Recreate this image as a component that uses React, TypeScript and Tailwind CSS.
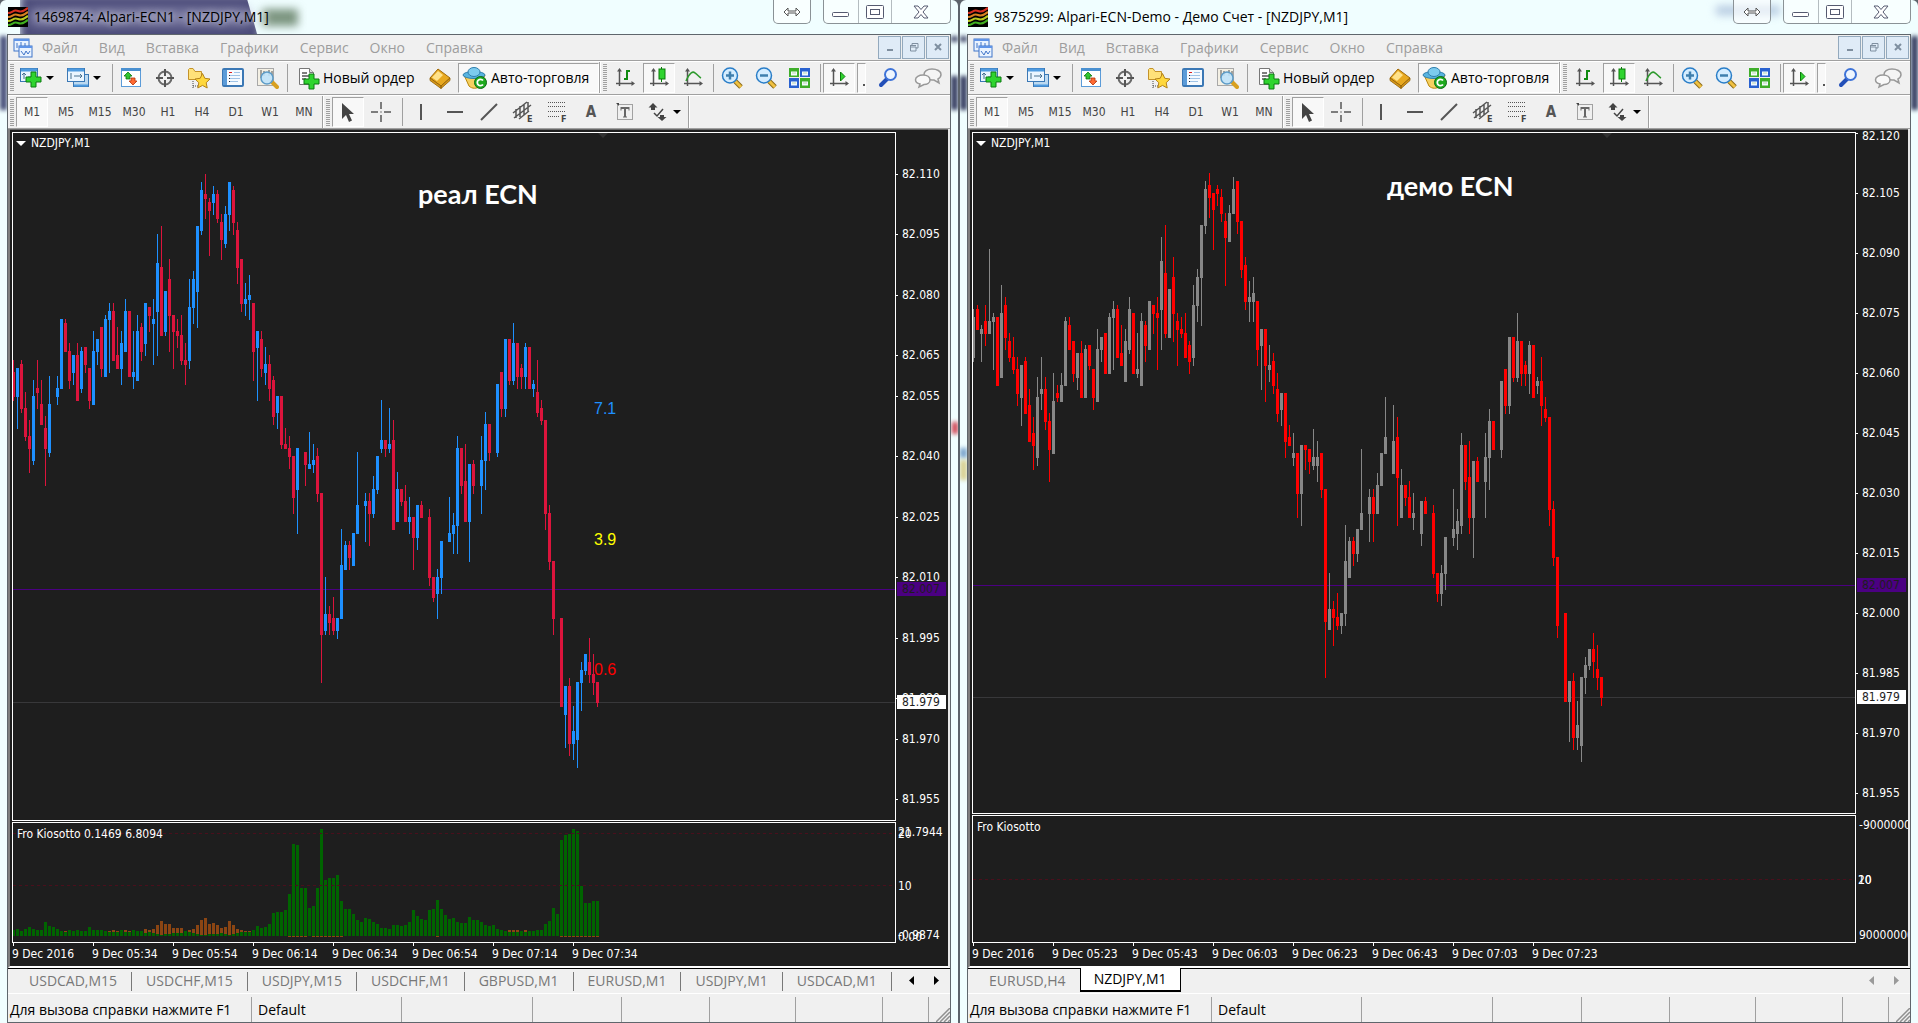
import React from 'react';

// One token per minute bar: high/open/close/low in points around 82.000, "-" for a minute without ticks
const REAL_BARS = `
64/61/55/54 62/55/62/47 64/63/52/51 56/52/45/44 49/45/42/36 59/39/55/38 64/57/56/52 59/53/48/48 50/47/42/33 60/41/53/40
- 60/55/57/53 74/57/74/57 74/73/66/66 68/66/59/57 65/61/65/58 68/65/54/54 67/57/66/56 67/67/63/61 62/62/54/52
71/53/66/53 69/66/69/63 72/72/62/60 75/60/74/60 78/74/76/61 78/76/64/64 72/65/62/62 71/62/68/58 79/66/76/66 76/76/60/60
71/60/61/57 75/59/71/59 73/72/66/64 78/68/78/65 77/77/75/71 79/73/74/63 95/76/88/65 97/87/70/70 81/71/81/70 89/84/75/66
75/75/71/62 74/71/70/67 75/70/64/63 68/64/63/58 84/64/77/62 86/77/84/73 97/81/97/72 108/96/106/95 110/105/104/99 104/103/101/90
107/103/105/100 106/105/99/98 100/98/94/89 102/93/100/92 108/100/108/96 107/106/98/95 98/96/87/83 89/89/78/76 83/78/79/75 85/79/80/74
78/78/66/59 71/67/71/54 71/69/62/60 67/61/63/58 65/63/57/54 60/59/50/48 55/51/55/47 55/55/43/42 47/43/42/42 45/42/40/37
40/40/30/26 42/32/42/21 - 41/41/38/33 46/37/38/37 43/38/39/36 42/40/31/29 31/31/-4/-16 10/-3/1/-4 3/1/-1/-4
5/0/-3/-4 0/-3/0/-5 22/0/13/0 19/12/18/12 19/18/15/12 21/13/21/13 41/21/28/21 - 31/28/29/19 31/29/26/18
35/26/32/25 40/32/40/31 54/42/44/41 44/44/42/40 52/42/43/41 49/44/22/22 36/24/32/24 32/32/29/28 33/29/24/24 30/24/25/21
25/25/20/12 28/20/28/17 29/28/25/25 - 27/25/10/8 10/10/5/4 12/6/10/0 19/10/19/6 - 30/19/21/19
26/21/23/16 45/23/42/16 42/42/33/31 43/34/24/24 38/24/38/14 39/38/33/31 - 45/33/39/26 51/39/48/32 48/48/41/39
- 58/41/58/40 61/61/52/50 69/52/69/50 69/69/59/58 73/59/68/58 68/68/60/57 63/62/60/57 68/60/67/57 67/67/57/57
59/57/58/55 64/56/51/50 54/52/49/48 49/49/26/22 28/26/14/12 14/14/0/-4 - 0/0/-22/-22 -17/-24/-17/-32 -15/-17/-31/-34
-22/-31/-28/-35 -16/-30/-16/-37 -11/-16/-13/-23 -9/-13/-9/-14 -5/-11/-14/-16 -9/-14/-16/-19 -16/-16/-21/-22`;

const DEMO_BARS = `
76/64/74/63 77/76/71/71 72/70/71/63 77/73/70/67 91/70/73/70 75/73/74/61 74/74/57/57 82/59/75/59 79/77/69/66 70/68/64/63
69/64/61/60 64/61/55/52 62/54/62/47 64/63/50/50 56/52/43/43 49/45/42/36 59/39/54/37 64/55/56/51 59/56/48/46 50/48/41/33
60/40/53/40 57/55/54/53 60/53/57/53 74/57/73/57 74/72/66/66 68/68/60/58 65/59/65/56 68/65/54/54 67/54/66/54 67/67/62/61
61/61/54/51 71/53/66/53 69/66/69/63 70/70/60/60 75/60/74/60 78/74/76/61 77/76/64/64 72/65/62/62 71/58/68/58 79/66/76/65
75/75/60/60 70/60/61/59 75/57/73/57 73/72/67/63 78/66/78/66 77/77/75/70 79/75/74/61 94/76/88/66 97/85/70/69 81/69/81/69
89/84/75/68 75/73/71/62 74/71/70/69 75/70/64/64 68/67/63/60 82/64/77/62 86/77/84/73 97/84/97/72 108/97/106/95 110/107/104/99
105/105/101/91 107/106/105/102 106/104/100/98 100/98/94/82 102/93/100/93 109/100/106/100 108/108/98/95 98/98/86/84 89/87/78/76 83/78/79/73
84/78/80/73 78/78/66/62 71/67/71/56 71/71/62/53 67/61/62/58 65/63/57/55 60/56/50/48 55/51/55/47 55/55/43/39 47/44/42/42
45/39/40/37 40/40/30/24 42/30/42/22 42/42/41/36 41/41/38/35 46/37/39/36 43/37/39/33 40/40/31/29 31/31/-2/-16 10/-4/1/-4
3/1/-1/-8 5/-1/-3/-4 0/-3/0/-5 22/0/13/-3 19/9/18/9 19/18/15/12 21/15/21/13 41/21/25/21 - 31/25/29/18
31/29/25/18 35/25/32/25 40/32/40/32 54/40/44/40 - 52/35/43/35 49/44/34/22 36/24/32/24 32/32/29/27 33/29/24/24
30/24/25/21 - 28/20/28/17 29/28/25/25 - 27/25/10/9 10/10/5/3 12/5/10/2 19/10/19/6 -
31/19/21/17 26/20/23/16 45/22/42/20 42/42/33/31 43/34/24/20 38/24/38/14 39/38/33/33 - 45/33/39/24 51/39/48/31
48/48/41/41 - 58/41/58/39 61/61/52/50 69/52/69/50 69/69/59/58 75/59/68/58 68/68/60/57 63/62/60/57 68/60/67/55
67/67/54/54 59/57/58/55 64/58/52/47 54/51/49/48 49/49/26/22 28/26/14/12 14/14/-3/-6 - 0/0/-22/-22 -17/-22/-17/-32
-15/-17/-31/-34 -22/-31/-28/-34 -16/-33/-16/-37 -11/-16/-13/-20 -9/-13/-9/-14 -5/-9/-12/-16 -8/-14/-16/-19 -16/-16/-21/-23`;

// Histogram heights; "green/brown" where the second buffer shows above the first
const KIOSOTTO = `
6 7 5 7 9 7 6 6 14 10 9 7 5 4/5 6 5 6 5 5 9 6 6 6 5 4/5 4/6 4/5 6 4/6 4/5
6 5 5 3/7 4/6 3/7 2/11 1/15 2/12 2/12 3/8 3/8 3/8 5 4/6 3/7 2/11 1/16 1/18 2/12 2/13 2/11 3/8 2/9 1/15 2/11 3/7 4/6 4/5 4/5
6 10 8 9 12 23 24 24 26 42 92 91 48 48 28 30 48 107 56 58 58 61 35 27 27 22 16 14 18 17
14 12 8 8 7 11 11 10 11 14 26 20 17 16 26 27 36 27 21 17 18 14 13 13 19 16 16 14 11 10
11 7 6 5 4/6 4/6 4/6 5 4/6 5 5 6 6 12 15 28 22 96 101 102 107 105 50 33 33 35 35`;

const CHART_FONT = 'font-["DejaVu_Sans_Condensed","DejaVu_Sans",sans-serif]';
const UI_FONT = 'font-["Open_Sans","Noto_Sans",sans-serif]';

type Scale = { top: number; step: number };
const yOf = (points: number, s: Scale) => Math.round(s.top + (110 - points) * s.step);
const price = (points: number) => (82 + points / 1000).toFixed(3);

function Candles({ bars, scale, up, down }: { bars: string; scale: Scale; up: string; down: string }) {
  return (
    <g shapeRendering="crispEdges">
      {bars.trim().split(/\s+/).map((bar, i) => {
        if (bar === '-') return null;
        const [high, open, close, low] = bar.split('/').map(Number);
        const color = close > open ? up : down;
        const bodyTop = yOf(Math.max(open, close), scale);
        const bodyEnd = yOf(Math.min(open, close), scale) + 1;
        const wickTop = yOf(high, scale);
        return (
          <g key={i} fill={color}>
            <rect x={i * 4} y={wickTop} width={1} height={yOf(low, scale) + 1 - wickTop} />
            <rect x={i * 4 - 1} y={bodyTop} width={3} height={bodyEnd - bodyTop} />
          </g>
        );
      })}
    </g>
  );
}

function Histogram() {
  return (
    <g shapeRendering="crispEdges">
      {KIOSOTTO.trim().split(/\s+/).map((bar, i) => {
        const [green, brown] = bar.split('/').map(Number);
        return (
          <g key={i}>
            {brown && <rect x={i * 4 - 1} y={113 - brown} width={3} height={brown} fill="#8b4513" />}
            <rect x={i * 4 - 1} y={113 - green} width={3} height={green} fill="#006400" />
            {green > 29 && <rect x={i * 4 - 1} y={113} width={3} height={1} fill="#8b4513" />}
          </g>
        );
      })}
    </g>
  );
}

function AxisLabel({ y, x = 6, children, fill = '#fff' }: { y: number; x?: number; children: React.ReactNode; fill?: string }) {
  return <text x={x} y={y + 4} fill={fill} className="text-[12px]">{children}</text>;
}

function PriceBadge({ y, value, bg, fg }: { y: number; value: string; bg: string; fg: string }) {
  return (
    <g>
      <rect x={1} y={y - 7} width={49} height={14} fill={bg} />
      <AxisLabel y={y} fill={fg}>{value}</AxisLabel>
    </g>
  );
}

/* ---------- icons ---------- */

const Svg = ({ size = 24, children }: { size?: number; children: React.ReactNode }) => (
  <svg width={size} height={size} viewBox={`0 0 ${size} ${size}`} fill="none" className="shrink-0">{children}</svg>
);

const Plus = ({ x, y }: { x: number; y: number }) => (
  <path transform={`translate(${x} ${y})`} d="M5 0h5v5h5v5h-5v5H5v-5H0V5h5z" fill="#2fd42f" stroke="#0c7a12" />
);

const NewChartIcon = () => (
  <Svg>
    <rect x="1.5" y="2.5" width="17" height="13" fill="#eaf5ff" stroke="#3b78b5" />
    <path d="M2 4h16" stroke="#4f9be0" strokeWidth="3" />
    <path d="M5 7v6M3 9l2-2 2 2M9 11h6" stroke="#47708f" />
    <Plus x={7} y={6} />
  </Svg>
);

const ProfilesIcon = () => (
  <Svg>
    <rect x="7.5" y="8.5" width="15" height="12" fill="#bcd9f0" stroke="#3b78b5" />
    <path d="M8 19.500h14" stroke="#4f9be0" strokeWidth="2" />
    <rect x="1.5" y="2.5" width="17" height="13" fill="#eaf5ff" stroke="#3b78b5" />
    <path d="M2 4h16" stroke="#4f9be0" strokeWidth="3" />
    <path d="M5 7v6M8 10h8M14 8l2 2-2 2" stroke="#47708f" />
  </Svg>
);

const MarketWatchIcon = () => (
  <Svg>
    <rect x="2.500" y="2.500" width="19" height="18" fill="#fff" stroke="#5b9bd8" />
    <path d="M2 3.500h20" stroke="#4a90d0" strokeWidth="3" />
    <path d="M9 6l4 4h-2v3H7v-3H5z" fill="#2fc42f" stroke="#0c7a12" strokeWidth="0.800" />
    <path d="M14 19l4-4h-2v-3h-4v3h-2z" fill="#ff6a33" stroke="#b83208" strokeWidth="0.800" />
  </Svg>
);

const DataWindowIcon = () => (
  <Svg>
    <circle cx="12" cy="12" r="6.500" stroke="#6a6a6a" strokeWidth="2" />
    <path d="M12 3v7M12 14v7M3 12h7M14 12h7" stroke="#555" strokeWidth="2" />
  </Svg>
);

const NavigatorIcon = () => (
  <Svg>
    <path d="M1.500 3.500V13.500h13V5.500H8l-2-3H2.500z" fill="#ffe27a" stroke="#c4932a" />
    <path d="M6 15v7M6 20h5" stroke="#444" strokeDasharray="1 1" />
    <path d="M15.500 7.500l2.300 4.800 5.200.7-3.800 3.700 1 5.300-4.700-2.600-4.700 2.600 1-5.300L8 13l5.200-.7z" fill="#ffd83d" stroke="#b5831a" />
  </Svg>
);

const TerminalIcon = () => (
  <Svg>
    <rect x="2" y="3" width="20" height="17" rx="1" fill="#f4faff" stroke="#3b78b5" strokeWidth="2" />
    <path d="M4 4v15" stroke="#5b9bd8" strokeWidth="4" />
    <path d="M8 6.500h3" stroke="#e02020" />
    <path d="M8 9.500h11M8 12.500h11M8 15.500h9M13 6.500h6" stroke="#9fc3e6" />
    <path d="M8 9.500h1M8 12.500h1M8 15.500h1" stroke="#223" />
  </Svg>
);

const TesterIcon = () => (
  <Svg>
    <rect x="2.500" y="2.500" width="16" height="17" fill="#f4f0e4" stroke="#a8a8a8" />
    <path d="M6 4v8M9 5v5M14 4v6M17 5v5" stroke="#555" />
    <path d="M17 16l5 5" stroke="#d8a020" strokeWidth="4" strokeLinecap="round" />
    <circle cx="12" cy="12" r="6" fill="#bfe2fa" fillOpacity="0.900" stroke="#5d9cc8" strokeWidth="1.500" />
  </Svg>
);

const NewOrderIcon = () => (
  <Svg>
    <path d="M3.500 2.500h10l4 4v12h-14z" fill="#fff" stroke="#777" />
    <path d="M13.500 2.500v4h4" fill="#ddd" stroke="#777" />
    <path d="M6 7h5M6 10h9M6 13h4" stroke="#555" strokeWidth="1.500" />
    <Plus x={8} y={8} />
  </Svg>
);

const MetaEditorIcon = () => (
  <Svg>
    <path d="M10 3l12 9-9 8L2 12z" fill="#e8a920" stroke="#a06a08" />
    <path d="M2 12l11 8v2.500L2 14.500zM13 20l9-8v2.500l-9 8z" fill="#d89818" stroke="#8f5f08" strokeWidth="0.800" />
    <path d="M10 5l5 4-6 6-5-3.500z" fill="#ffe28a" />
  </Svg>
);

const AutoTradingIcon = () => (
  <svg width="26" height="24" viewBox="0 0 26 24" fill="none" className="shrink-0">
    <path d="M2 9h21l-5 11c-3 3-8 3-11 0z" fill="#f5d060" stroke="#b8860b" />
    <ellipse cx="12" cy="9" rx="11" ry="3.500" fill="#58b4e0" stroke="#2f7fae" />
    <ellipse cx="12" cy="6" rx="6" ry="4.500" fill="#7ccbee" stroke="#2f7fae" />
    <circle cx="18.500" cy="16.500" r="6" fill="#1faa1f" stroke="#0a6d0f" />
    <path d="M21 14.500a3.200 3.200 0 1 0 0 4" stroke="#fff" strokeWidth="1.800" />
  </svg>
);

const axes = (
  <>
    <path d="M6.500 4v16M3 17.500h17" stroke="#555" strokeWidth="1.500" />
    <path d="M6.500 2l2.500 3.500H4zM22 17.500L18.500 15v5z" fill="#555" />
  </>
);

const BarChartIcon = () => <Svg>{axes}<path d="M14 4v10M14 5h3M11 13h3" stroke="#108a10" strokeWidth="2" /></Svg>;
const CandleIcon = () => (
  <Svg>{axes}<path d="M14.500 1v15" stroke="#0b7a0b" /><rect x="12" y="3" width="6" height="10" fill="#2fd42f" stroke="#0b7a0b" /></Svg>
);
const LineChartIcon = () => <Svg>{axes}<path d="M5 15c4-9 7-10 9-8 2 1 4 4 6 5" stroke="#2e9a2e" strokeWidth="1.500" /></Svg>;
const AutoScrollIcon = () => <Svg>{axes}<path d="M13.500 6v9l4.500-4.500z" fill="#2fd42f" stroke="#0b7a0b" /></Svg>;

const ZoomIcon = ({ plus }: { plus?: boolean }) => (
  <Svg>
    <path d="M15 15l6 6" stroke="#8a6a18" strokeWidth="5" />
    <path d="M15 15l6 6" stroke="#f0c040" strokeWidth="3" />
    <circle cx="10" cy="9.500" r="7.500" fill="#d5edff" stroke="#2a7ec8" strokeWidth="1.500" />
    <path d={plus ? 'M6 9.500h8M10 5.500v8' : 'M6 9.500h8'} stroke="#3f7fae" strokeWidth="2.500" />
  </Svg>
);

const TileIcon = () => (
  <Svg>
    <rect x="1" y="2" width="10" height="9" fill="#3fae2a" /><rect x="12" y="2" width="10" height="9" fill="#2a62d0" />
    <rect x="1" y="12" width="10" height="10" fill="#2a62d0" /><rect x="12" y="12" width="10" height="10" fill="#3fae2a" />
    <path d="M3 7.500h6M14 7.500h6M3 17.500h6M14 17.500h6" stroke="#f4faff" strokeWidth="4" />
    <path d="M4 7h4M15 7h4M4 17h4M15 17h4" stroke="#b8d8b0" />
  </Svg>
);

const SearchIcon = () => (
  <Svg>
    <path d="M11 13l-6 6" stroke="#2450b8" strokeWidth="4" strokeLinecap="round" />
    <circle cx="14.500" cy="8.500" r="5.500" fill="#eef6ff" stroke="#3f74d8" strokeWidth="2" />
  </Svg>
);

const ChatIcon = () => (
  <svg width="28" height="24" viewBox="0 0 28 24" fill="none">
    <path d="M18 3c5 0 9 2.200 9 5.500 0 2-1.300 3.500-3 4.500l1 4-5-3h-2c-5 0-8-2.500-8-5.500S13 3 18 3z" fill="#f4f4f4" stroke="#999" strokeWidth="1.500" />
    <path d="M9 9c4 0 7 2 7 5s-3 4.500-6 4.500L5 21l1-3c-3-.5-4.500-2-4.500-4.200C1.500 11 5 9 9 9z" fill="#f9f9f9" stroke="#999" strokeWidth="1.500" />
  </svg>
);

const CursorIcon = () => <Svg><path d="M6 3v16l4-4 3 7 3-1.500-3-6.500h5z" fill="#444" /></Svg>;
const CrosshairIcon = () => <Svg><path d="M11 2v7M11 15v7M1 12h7M14 12h7M11 11.500v1" stroke="#555" strokeWidth="1.500" /></Svg>;
const VLineIcon = () => <Svg><path d="M12 4v16" stroke="#555" strokeWidth="2" /></Svg>;
const HLineIcon = () => <Svg><path d="M4 12h16" stroke="#555" strokeWidth="2" /></Svg>;
const TrendIcon = () => <Svg><path d="M4 20L20 4" stroke="#555" strokeWidth="2" /></Svg>;
const ChannelIcon = () => (
  <Svg>
    <path d="M2 13L16 2M3 18L20 5M8 19l10-8M5 9v9M9 6v11M13 4v11M17 2v10" stroke="#555" strokeWidth="1.500" />
    <text x="16" y="22" className="text-[9px] font-bold" fill="#444">E</text>
  </Svg>
);
const FiboIcon = () => (
  <Svg>
    <path d="M3 2.500h18M3 6.500h18M3 11.500h18M3 16.500h12" stroke="#555" strokeDasharray="1 1" />
    <text x="16" y="22" className="text-[9px] font-bold" fill="#444">F</text>
  </Svg>
);
const LabelIcon = () => (
  <Svg>
    <rect x="4.500" y="4.500" width="15" height="15" stroke="#555" strokeDasharray="1 1" />
    <path d="M8 8h8M12 8v9" stroke="#666" strokeWidth="2" />
    <path d="M8 7v3.500M16 7v3.500M10 17h4" stroke="#666" />
    <path d="M3 3h3v3z" fill="#444" />
  </Svg>
);
const ArrowsIcon = () => (
  <Svg>
    <path d="M7 3l4.500 4.500H9V10H5V7.500H2.500zM16 21l4.500-4H18v-2h-4v2h-2.500z" fill="#444" />
    <path d="M8 13l3 3 6-7" stroke="#444" strokeWidth="1.500" />
  </Svg>
);

const MenuChartIcon = () => (
  <svg width="20" height="20" viewBox="0 0 20 20" fill="none" className="shrink-0">
    <rect x="1" y="1" width="15" height="12" fill="#eaf3ff" stroke="#3f74c8" />
    <path d="M1 2h15" stroke="#5f94e8" strokeWidth="2" />
    <path d="M4 5v5M8 4v4M12 5v3" stroke="#3f74c8" />
    <rect x="6" y="8" width="13" height="11" fill="#eaf3ff" stroke="#3f74c8" />
    <path d="M6 9h13" stroke="#5f94e8" strokeWidth="2" />
    <path d="M8 13l3 4 2-4 2 3 2-3" stroke="#3f74c8" />
  </svg>
);

const AppIcon = () => (
  <svg width="20" height="20" viewBox="0 0 20 20" fill="none" className="shrink-0 bg-black">
    <path d="M0 6c5 0 5-4 10-2s6-1 10-3" stroke="#d83020" strokeWidth="2" />
    <path d="M0 10c5 0 5-4 10-2s6-1 10-3" stroke="#d88020" strokeWidth="2" />
    <path d="M0 14c5 0 5-4 10-2s6-1 10-3" stroke="#b8c820" strokeWidth="2" />
    <path d="M0 18c5 0 5-4 10-2s6-1 10-3" stroke="#40b020" strokeWidth="2" />
  </svg>
);

const Caret = () => <span className="border-x-4 border-t-4 border-x-transparent border-t-black"></span>;

/* ---------- window chrome ---------- */

const Grip = () => (
  <div className="mx-[2px] h-[27px] w-[4px] shrink-0 bg-[repeating-linear-gradient(#a0a0a0_0_1px,#f0f0f0_1px_2px)]"></div>
);
const Separator = () => <div className="mx-[2px] h-[28px] w-px shrink-0 bg-[#a0a0a0]"></div>;
const BandEnd = () => <div className="h-full w-[2px] shrink-0 border-l border-[#a0a0a0] bg-white"></div>;

const PRESSED = 'border border-t-[#a0a0a0] border-l-[#a0a0a0] border-r-white border-b-white bg-[#f8f8f8]';

function Tool({ label, pressed, children }: { label: string; pressed?: boolean; children: React.ReactNode }) {
  return (
    <div className="w-[34px] shrink-0 pr-[2px]">
      <button aria-label={label} className={`flex h-[30px] w-[32px] items-center justify-center ${pressed ? PRESSED : ''}`}>
        {children}
      </button>
    </div>
  );
}

function TitleBar({ title }: { title: string }) {
  return (
    <div className="relative flex h-[34px] items-start pl-px">
      <div className="flex min-w-0 flex-1 items-center gap-[6px] pt-[7px]">
        <AppIcon />
        <h1 className="whitespace-nowrap text-[14px] leading-[20px] text-black [text-shadow:0_0_6px_rgba(255,255,255,0.5),0_0_10px_rgba(255,255,255,0.6)]">{title}</h1>
      </div>
      <button aria-label="Switch screen" className="mr-[12px] flex h-[24px] w-[38px] items-center justify-center rounded-b-[5px] border border-t-0 border-[#8a9296] bg-white/60">
        <svg width="18" height="10" viewBox="0 0 18 10"><path d="M1 5l4-4v3h8V1l4 4-4 4V6H5v3z" fill="#fff" stroke="#555" /></svg>
      </button>
      <div className="flex h-[24px] rounded-b-[5px] border border-t-0 border-[#8a9296] bg-white/50">
        <button aria-label="Minimize" className="flex w-[35px] items-center justify-center border-r border-[#b4bcc0] pt-[6px]">
          <svg width="18" height="6" viewBox="0 0 18 6"><rect x="0.500" y="0.500" width="16" height="4" rx="1" fill="#fff" stroke="#555a70" /></svg>
        </button>
        <button aria-label="Maximize" className="flex w-[33px] items-center justify-center border-r border-[#b4bcc0]">
          <svg width="18" height="14" viewBox="0 0 18 14" fill="#fff" stroke="#555a70"><rect x="0.500" y="0.500" width="17" height="13" rx="1" /><rect x="4.500" y="4.500" width="9" height="5" /></svg>
        </button>
        <button aria-label="Close" className="flex w-[58px] items-center justify-center">
          <svg width="16" height="14" viewBox="0 0 16 14"><path d="M1 1h4l3 3.500L11 1h4l-5 6 5 6h-4L8 9.500 5 13H1l5-6z" fill="#fff" stroke="#555a70" /></svg>
        </button>
      </div>
    </div>
  );
}

const MENU = ['Файл', 'Вид', 'Вставка', 'Графики', 'Сервис', 'Окно', 'Справка'];

function MenuBar() {
  const mdi = 'flex h-[23px] w-[23px] items-center justify-center border border-[#93a9bd] bg-[#dfebf7]';
  return (
    <nav className="flex h-[27px] items-center border-b border-white bg-[#f0f0f0] pl-[5px] pr-px shadow-[inset_0_-1px_0_#a0a0a0]">
      <MenuChartIcon />
      <div className="flex flex-1 gap-[21px] pl-[9px]">
        {MENU.map((item) => (
          <button key={item} className="text-[14px] leading-[24px] text-[#9d9d9d]">{item}</button>
        ))}
      </div>
      <div className="flex gap-px pb-[2px]">
        <button aria-label="Minimize chart" className={mdi}><svg width="10" height="10"><path d="M2 8h6" stroke="#7f8fa0" strokeWidth="2" /></svg></button>
        <button aria-label="Restore chart" className={mdi}><svg width="10" height="10" fill="none" stroke="#7f8fa0"><path d="M3 3V1.500h6V6H7M1 3.500h6M1 5h6v4H1.500V3" /></svg></button>
        <button aria-label="Close chart" className={mdi}><svg width="10" height="10"><path d="M2 2l6 6M8 2L2 8" stroke="#7f8fa0" strokeWidth="2" /></svg></button>
      </div>
    </nav>
  );
}

function MainToolbar() {
  return (
    <div className="flex h-[34px] items-center overflow-hidden border-b border-white bg-[#f0f0f0] pb-[2px] shadow-[inset_0_-1px_0_#a0a0a0]">
      <Grip />
      <button aria-label="New chart" className="flex w-[47px] shrink-0 items-center gap-[3px] pl-[3px]"><NewChartIcon /><Caret /></button>
      <button aria-label="Profiles" className="flex w-[47px] shrink-0 items-center gap-[3px] pl-[3px]"><ProfilesIcon /><Caret /></button>
      <Separator />
      <Tool label="Market Watch"><MarketWatchIcon /></Tool>
      <Tool label="Data Window"><DataWindowIcon /></Tool>
      <Tool label="Navigator"><NavigatorIcon /></Tool>
      <Tool label="Terminal"><TerminalIcon /></Tool>
      <Tool label="Strategy Tester"><TesterIcon /></Tool>
      <Separator />
      <button className="flex w-[134px] shrink-0 items-center gap-[3px] whitespace-nowrap pl-[6px] text-[14px] leading-[20px] text-black"><NewOrderIcon />Новый ордер</button>
      <Tool label="MetaEditor"><MetaEditorIcon /></Tool>
      <button className={`flex h-[30px] w-[141px] shrink-0 items-center gap-[3px] whitespace-nowrap pl-[3px] text-[14px] leading-[20px] text-black ${PRESSED}`}><AutoTradingIcon />Авто-торговля</button>
      <BandEnd />
      <Grip />
      <Tool label="Bar chart"><BarChartIcon /></Tool>
      <Tool label="Candlesticks" pressed><CandleIcon /></Tool>
      <Tool label="Line chart"><LineChartIcon /></Tool>
      <Separator />
      <Tool label="Zoom in"><ZoomIcon plus /></Tool>
      <Tool label="Zoom out"><ZoomIcon /></Tool>
      <Tool label="Tile windows"><TileIcon /></Tool>
      <Separator />
      <Tool label="Auto scroll" pressed><AutoScrollIcon /></Tool>
      <button aria-label="Chart shift" className={`flex h-[30px] w-[9px] shrink-0 items-center justify-end ${PRESSED}`}><span className="mt-[14px] h-[2px] w-[2px] bg-[#555]"></span></button>
      <div className="flex flex-1 items-center justify-end gap-[14px] pr-[8px]">
        <button aria-label="Search"><SearchIcon /></button>
        <button aria-label="Chat"><ChatIcon /></button>
      </div>
    </div>
  );
}

const PERIODS = ['M1', 'M5', 'M15', 'M30', 'H1', 'H4', 'D1', 'W1', 'MN'];

function LineToolbar() {
  return (
    <div className={`flex h-[33px] items-center overflow-hidden border-b border-[#a0a0a0] bg-[#f0f0f0] ${CHART_FONT}`}>
      <Grip />
      {PERIODS.map((period, i) => (
        <Tool key={period} label={period} pressed={i === 0}>
          <span className="text-[12px] leading-[16px] text-[#444]">{period}</span>
        </Tool>
      ))}
      <BandEnd />
      <Grip />
      <Tool label="Cursor" pressed><CursorIcon /></Tool>
      <Tool label="Crosshair"><CrosshairIcon /></Tool>
      <Separator />
      <Tool label="Vertical line"><VLineIcon /></Tool>
      <Tool label="Horizontal line"><HLineIcon /></Tool>
      <Tool label="Trendline"><TrendIcon /></Tool>
      <Tool label="Equidistant channel"><ChannelIcon /></Tool>
      <Tool label="Fibonacci"><FiboIcon /></Tool>
      <Tool label="Text"><span className="text-[15px] font-bold leading-[20px] text-[#555]">A</span></Tool>
      <Tool label="Text label"><LabelIcon /></Tool>
      <button aria-label="Arrows" className="flex w-[45px] shrink-0 items-center gap-[3px] pl-[3px]"><ArrowsIcon /><Caret /></button>
      <BandEnd />
    </div>
  );
}

function StatusBar() {
  return (
    <footer className="grid h-[28px] grid-cols-[1fr_150px_131px_89px_88px_86px_87px_46px_21px] items-stretch bg-[#f0f0f0] pb-px pt-[3px] text-[14px] leading-[25px] text-black">
      <div className="whitespace-nowrap border-r border-[#a0a0a0] pl-[2px]">Для вызова справки нажмите F1</div>
      <div className="border-r border-[#a0a0a0] pl-[6px]">Default</div>
      {[0, 1, 2, 3, 4, 5].map((cell) => <div key={cell} className="border-r border-[#a0a0a0]"></div>)}
      <div className="flex items-end justify-end">
        <svg width="14" height="14"><path d="M0 14L14 0M4 14L14 4M8 14l6-6M12 14l2-2" stroke="#909090" strokeWidth="1.500" /></svg>
      </div>
    </footer>
  );
}

function Tabs({ tabs, active, arrows }: { tabs: string[]; active?: string; arrows: string }) {
  return (
    <div className="flex h-[26px] border-t border-b border-t-black border-b-white bg-[#f0f0f0] pl-[7px]">
      <div className="flex min-w-0 flex-1">
        {tabs.map((tab) => tab === active ? (
          <button key={tab} className="-mt-px mb-px border-x border-b-2 border-black bg-white px-[13px] text-[14px] leading-[22px] text-black">{tab}</button>
        ) : (
          <div key={tab} className="flex items-center">
            <button className="px-[14px] text-[14px] leading-[22px] text-[#787878]">{tab}</button>
            {!active && <span className="h-[19px] w-px bg-[#787878]"></span>}
          </div>
        ))}
      </div>
      <div className={`flex items-center gap-[20px] pb-[2px] pr-[11px] ${arrows}`}>
        <button aria-label="Scroll tabs left"><svg width="5" height="9" fill="currentColor"><path d="M5 0v9L0 4.500z" /></svg></button>
        <button aria-label="Scroll tabs right"><svg width="5" height="9" fill="currentColor"><path d="M0 0v9l5-4.500z" /></svg></button>
      </div>
    </div>
  );
}

function TimeAxis({ labels }: { labels: string[] }) {
  return (
    <div className="flex h-[23px] text-[12px] leading-[16px] text-white">
      {labels.map((label) => (
        <div key={label} className="w-[80px] shrink-0 whitespace-nowrap">
          <div className="ml-px h-[3px] w-px bg-white"></div>
          {label}
        </div>
      ))}
    </div>
  );
}

type ChartProps = {
  bars: string;
  scale: Scale;
  up: string;
  down: string;
  ticks: number[];
  caption: string;
  captionClass: string;
  shiftX: number;
  overlay?: React.ReactNode;
  indicatorTitle: string;
  indicatorClass: string;
  indicator: React.ReactNode;
  indicatorAxis: React.ReactNode;
  times: string[];
};

function Chart(props: ChartProps) {
  const { scale } = props;
  const bid = yOf(-21, scale);
  const level = yOf(7, scale);
  return (
    <main className={`flex min-h-0 flex-1 flex-col border-2 border-t-0 border-l-[#808080] border-b-white border-r-[#e8e8e8] bg-[#1e1e1e] ${CHART_FONT}`}>
      <div className="h-px bg-[#696969]"></div>
      <div className="flex min-h-0 flex-1 flex-col gap-px overflow-hidden pl-[2px] pt-[2px]">
        <section className="grid min-h-0 flex-1 grid-cols-[1fr_52px]">
          <div className="relative border border-white">
            <svg className="absolute inset-0 h-full w-full">
              <rect x="0" y={level} width="100%" height="1" fill="#4b0082" />
              <rect x="0" y={bid} width="100%" height="1" fill="#38383a" />
              <path transform={`translate(${props.shiftX} 0)`} d="M-5 0h10l-5 5z" fill="#333" />
              <Candles bars={props.bars} scale={scale} up={props.up} down={props.down} />
              {props.overlay}
            </svg>
            <div className="relative flex items-center gap-[5px] pl-[3px] pt-[2px] text-[12px] leading-[16px] text-white">
              <span className="border-x-[5px] border-t-[5px] border-x-transparent border-t-white"></span>
              NZDJPY,M1
            </div>
            <p className={`absolute whitespace-nowrap font-["Lato",sans-serif] text-[27px] font-bold leading-[30px] text-white ${props.captionClass}`}>{props.caption}</p>
          </div>
          <svg className="h-full w-full overflow-visible">
            {props.ticks.map((tick) => (
              <g key={tick}>
                <rect x="0" y={yOf(tick, scale) + 1} width="2" height="1" fill="#fff" />
                <AxisLabel y={Math.max(yOf(tick, scale) + 1, 4)}>{price(tick)}</AxisLabel>
              </g>
            ))}
            <PriceBadge y={level + 1} value={price(7)} bg="#4b0082" fg="#1e1e1e" />
            <PriceBadge y={bid + 1} value={price(-21)} bg="#fff" fg="#1e1e1e" />
          </svg>
        </section>
        <section className={`grid shrink-0 grid-cols-[1fr_52px] ${props.indicatorClass}`}>
          <div className="relative border border-white">
            <svg className="absolute inset-0 h-full w-full">{props.indicator}</svg>
            <p className="relative pl-[4px] pt-[3px] text-[12px] leading-[16px] text-white">{props.indicatorTitle}</p>
          </div>
          <svg className="h-full w-full">{props.indicatorAxis}</svg>
        </section>
        <div className="-mt-px"><TimeAxis labels={props.times} /></div>
      </div>
    </main>
  );
}

const DashedLevel = ({ y }: { y: number }) => (
  <line x1="0" x2="100%" y1={y + 0.5} y2={y + 0.5} stroke="#4a0f1c" strokeDasharray="3 3" />
);

function TerminalWindow({ title, haze, children }: { title: string; haze: React.ReactNode; children: React.ReactNode }) {
  return (
    <div className="relative flex min-w-0 flex-1 flex-col overflow-hidden rounded-t-[6px] bg-[#f0feff] px-[7px]">
      {haze}
      <TitleBar title={title} />
      <div className="relative flex min-h-0 flex-1 flex-col border border-[#5f666c]">
        <MenuBar />
        <MainToolbar />
        <LineToolbar />
        {children}
      </div>
    </div>
  );
}

export default function App() {
  return (
    <div className={`flex h-screen gap-[2px] bg-[#5c636b] ${UI_FONT}`}>
      <TerminalWindow
        title="1469874: Alpari-ECN1 - [NZDJPY,M1]"
        haze={
          <>
            <div className="absolute left-[20px] top-[-6px] h-[50px] w-[240px] bg-[#4a4a78] blur-[4px] [clip-path:polygon(0_0,94%_0,100%_100%,0_100%)]"></div>
            <div className="absolute left-[30px] top-[8px] h-[18px] w-[220px] bg-[#a0a0c4]/60 blur-[6px]"></div>
            <div className="absolute left-[262px] top-[9px] h-[17px] w-[36px] bg-[#5f7a60]/80 blur-[4px]"></div>
            <div className="absolute left-0 top-[36px] h-[74px] w-[7px] bg-[#454d78] blur-[2px]"></div>
            <div className="absolute right-0 top-[36px] h-[6px] w-[7px] bg-[#4a5070] blur-[2px]"></div>
            <div className="absolute right-0 top-[76px] h-[34px] w-[7px] bg-[#353c60] blur-[2px]"></div>
            <div className="absolute right-0 top-[422px] h-[12px] w-[6px] bg-[#d04050] blur-[2px]"></div>
          </>
        }
      >
        <Chart
          bars={REAL_BARS}
          scale={{ top: 41, step: 4.033 }}
          up="#1e90ff"
          down="#dc143c"
          ticks={[110, 95, 80, 65, 55, 40, 25, 10, -5, -20, -30, -45]}
          caption="реал ECN"
          captionClass="left-[405px] top-[46px]"
          shiftX={590}
          overlay={
            <g className="font-['Liberation_Sans',Arial,sans-serif] text-[16px]">
              <text x="581" y="281" fill="#1e90ff">7.1</text>
              <text x="581" y="412" fill="#ffff00">3.9</text>
              <text x="581" y="542" fill="#ff0000">0.6</text>
            </g>
          }
          indicatorTitle="Fro Kiosotto 0.1469 6.8094"
          indicatorClass="h-[121px]"
          indicator={<><Histogram /><DashedLevel y={10} /><DashedLevel y={62} /></>}
          indicatorAxis={
            <>
              <AxisLabel x={2} y={10}>21.7944</AxisLabel>
              <AxisLabel x={2} y={12}>20</AxisLabel>
              <AxisLabel x={2} y={64}>10</AxisLabel>
              <AxisLabel x={2} y={115}>0.00</AxisLabel>
              <AxisLabel x={2} y={113}>-0.9874</AxisLabel>
            </>
          }
          times={['9 Dec 2016', '9 Dec 05:34', '9 Dec 05:54', '9 Dec 06:14', '9 Dec 06:34', '9 Dec 06:54', '9 Dec 07:14', '9 Dec 07:34']}
        />
        <Tabs
          tabs={['USDCAD,M15', 'USDCHF,M15', 'USDJPY,M15', 'USDCHF,M1', 'GBPUSD,M1', 'EURUSD,M1', 'USDJPY,M1', 'USDCAD,M1']}
          arrows="text-black"
        />
        <StatusBar />
      </TerminalWindow>

      <TerminalWindow
        title="9875299: Alpari-ECN-Demo - Демо Счет - [NZDJPY,M1]"
        haze={
          <>
            <div className="absolute right-[138px] top-[6px] h-[9px] w-[64px] bg-[#b4c8e0] blur-[4px]"></div>
            <div className="absolute left-0 top-[36px] h-[6px] w-[7px] bg-[#4a5070] blur-[2px]"></div>
            <div className="absolute left-0 top-[76px] h-[34px] w-[7px] bg-[#353c60] blur-[2px]"></div>
            <div className="absolute left-0 top-[448px] h-[10px] w-[7px] bg-[#7aa4cc] blur-[2px]"></div>
            <div className="absolute left-0 top-[460px] h-[20px] w-[7px] bg-[#d8cf90] blur-[2px]"></div>
            <div className="absolute right-0 top-[36px] h-[74px] w-[7px] bg-[#353c60] blur-[2px]"></div>
          </>
        }
      >
        <Chart
          bars={DEMO_BARS}
          scale={{ top: 40, step: 4 }}
          up="#878787"
          down="#ff0000"
          ticks={[120, 105, 90, 75, 60, 45, 30, 15, 0, -15, -30, -45]}
          caption="демо ECN"
          captionClass="left-[414px] top-[38px]"
          shiftX={634}
          indicatorTitle="Fro Kiosotto"
          indicatorClass="h-[128px]"
          indicator={<DashedLevel y={63} />}
          indicatorAxis={
            <>
              <AxisLabel x={3} y={10}>-900000000</AxisLabel>
              <AxisLabel x={2} y={65}>10</AxisLabel>
              <AxisLabel x={2} y={65}>20</AxisLabel>
              <AxisLabel x={3} y={120}>900000000</AxisLabel>
            </>
          }
          times={['9 Dec 2016', '9 Dec 05:23', '9 Dec 05:43', '9 Dec 06:03', '9 Dec 06:23', '9 Dec 06:43', '9 Dec 07:03', '9 Dec 07:23']}
        />
        <Tabs tabs={['EURUSD,H4', 'NZDJPY,M1']} active="NZDJPY,M1" arrows="text-[#9a9a9a]" />
        <StatusBar />
      </TerminalWindow>
    </div>
  );
}
